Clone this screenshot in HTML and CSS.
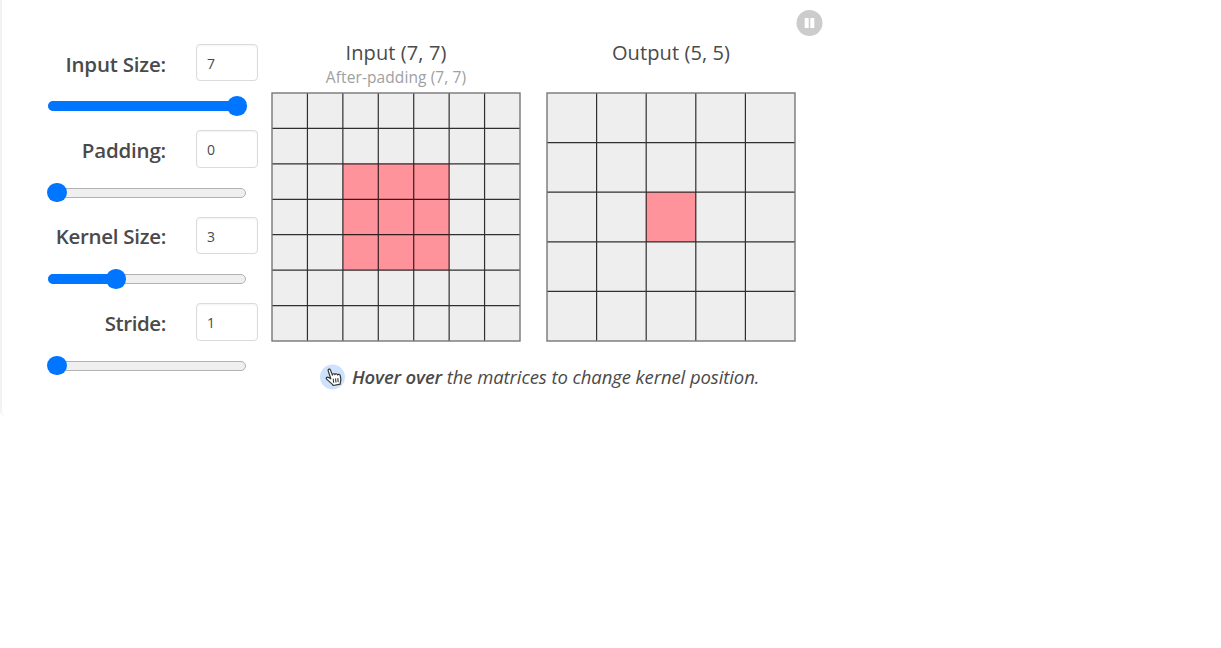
FILE: index.html
```html
<!DOCTYPE html>
<html lang="en">
<head>
<meta charset="utf-8">
<title>Convolution hyperparameters</title>
<link rel="stylesheet" href="styles.css">
</head>
<body>
<main class="panel">
  <section class="controls">
    <div class="control">
      <div class="field"><label class="l-input">Input Size:</label><span class="number">7</span></div>
      <div class="track"><div class="fill" style="width:189px"></div><div class="thumb" style="left:179px"></div></div>
    </div>
    <div class="control">
      <div class="field"><label class="l-pad">Padding:</label><span class="number">0</span></div>
      <div class="track"><div class="thumb" style="left:-1px"></div></div>
    </div>
    <div class="control">
      <div class="field"><label class="l-kernel">Kernel Size:</label><span class="number">3</span></div>
      <div class="track"><div class="fill" style="width:68px"></div><div class="thumb" style="left:58px"></div></div>
    </div>
    <div class="control">
      <div class="field"><label class="l-stride">Stride:</label><span class="number">1</span></div>
      <div class="track"><div class="thumb" style="left:-1px"></div></div>
    </div>
  </section>
  <section class="view">
    <div class="matrices">
      <div class="matrix">
        <h2>Input (7, 7)</h2>
        <p class="sub">After-padding (7, 7)</p>
        <svg class="grid" width="250" height="250" viewBox="0 0 250 250">
          <rect x="1" y="1" width="248" height="248" fill="#eee"/>
          <rect x="71.86" y="71.86" width="106.28" height="106.28" fill="#ff939b"/>
          <path class="line" d="M36.43 1v248M71.86 1v248M107.29 1v248M142.71 1v248M178.14 1v248M213.57 1v248M1 36.43h248M1 71.86h248M1 107.29h248M1 142.71h248M1 178.14h248M1 213.57h248"/>
          <rect class="edge" x="1" y="1" width="248" height="248"/>
        </svg>
      </div>
      <div class="matrix">
        <h2>Output (5, 5)</h2>
        <p class="sub"></p>
        <svg class="grid" width="250" height="250" viewBox="0 0 250 250">
          <rect x="1" y="1" width="248" height="248" fill="#eee"/>
          <rect x="100.2" y="100.2" width="49.6" height="49.6" fill="#ff939b"/>
          <path class="line" d="M50.6 1v248M100.2 1v248M149.8 1v248M199.4 1v248M1 50.6h248M1 100.2h248M1 149.8h248M1 199.4h248"/>
          <rect class="edge" x="1" y="1" width="248" height="248"/>
        </svg>
      </div>
    </div>
    <div class="hint">
      <svg class="hand" width="26" height="26" viewBox="0 0 26 26">
        <circle cx="12.5" cy="13" r="12.5" fill="#cfe2fb"/>
        <path d="M10.8 14.8 8.2 6.9C7.6 5.1 9.8 4.3 10.5 6.1L12.4 11.1C12.2 9.6 14.4 9.2 14.9 10.7 15.2 9.3 17.2 9.5 17.6 11 18.3 9.8 20 10.4 20.3 11.8L20.8 15.2C21 17 20.2 18 20.2 20.2L13.2 21.5C12.2 19.4 9.2 17.8 6.8 15.4 5.3 13.9 7.2 12.6 8.5 13.4Z" fill="#fff" stroke="#333" stroke-width="1.2" stroke-linejoin="round"/>
        <path d="M13.2 14.8l.5 4M15.5 14.5l.5 4M17.8 14.1l.4 4" stroke="#333" stroke-width="1.1"/>
      </svg>
      <p><strong>Hover over</strong> <span>the matrices to change kernel position.</span></p>
    </div>
  </section>
  <svg class="pause" width="27" height="27" viewBox="0 0 27 27">
    <circle cx="13.5" cy="13" r="13" fill="#ccc"/>
    <path d="M8.7 8h4v10h-4zM14.3 8h4v10h-4z" fill="#fff"/>
  </svg>
</main>
</body>
</html>
```
FILE: styles.css
```css
* { box-sizing: border-box; }
body {
  margin: 0;
  background: #fff;
  color: #4a4a4a;
  font-family: "Open Sans", "Noto Sans", sans-serif;
}
p, h2 { margin: 0; font-weight: 400; white-space: nowrap; }
.panel {
  display: flex;
  align-items: flex-start;
  width: 830px;
  height: 416px;
  border-left: 2px solid #f3f3f3;
  border-bottom-left-radius: 5px;
}
.controls {
  display: flex;
  flex-direction: column;
  width: 210px;
  margin: 44px 13px 0 46px;
}
.control { height: 86.4px; }
.field {
  display: flex;
  justify-content: flex-end;
  align-items: center;
  gap: 30px;
  height: 37.4px;
}
.field label {
  font-size: 20.5px;
  line-height: 28px;
  font-weight: 550;
  white-space: nowrap;
  padding-top: 2px;
}
.l-input { letter-spacing: -0.2px; }
.l-pad { letter-spacing: -0.2px; }
.l-kernel { letter-spacing: -0.3px; }
.l-stride { letter-spacing: -0.4px; }
.number {
  width: 62px;
  height: 37.4px;
  padding-left: 10px;
  border: 1px solid #dbdbdb;
  border-radius: 4px;
  box-shadow: inset 0 1px 2px rgba(10, 10, 10, .05);
  font-size: 14px;
  line-height: 37px;
}
.track {
  position: relative;
  width: 198px;
  height: 10px;
  margin-top: 20px;
  border: 1px solid #b2b2b2;
  border-radius: 5px;
  background: #efefef;
}
.fill {
  height: 10px;
  margin: -1px;
  border-radius: 5px 0 0 5px;
  background: #0075ff;
}
.thumb {
  position: absolute;
  top: -6px;
  width: 19.5px;
  height: 19.5px;
  margin-left: -1px;
  border-radius: 50%;
  background: #0075ff;
}
.view { width: 525px; padding-top: 38px; }
.matrices { display: flex; gap: 25px; }
.matrix { width: 250px; text-align: center; }
.matrix h2 { font-size: 20px; line-height: 30px; letter-spacing: 0.1px; }
.sub {
  height: 24px;
  font-size: 15.5px;
  line-height: 19px;
  color: #a0a0a0;
  letter-spacing: 0.1px;
}
.grid { display: block; }
.line { fill: none; stroke: #000; stroke-opacity: .8; stroke-width: 1.2; }
.edge { fill: none; stroke: #777; stroke-width: 1.4; }
.hint {
  display: flex;
  align-items: center;
  gap: 6px;
  margin: 21px 0 0 49px;
  font-size: 18.5px;
  line-height: 27px;
  font-style: italic;
}
.hint strong { font-weight: 650; letter-spacing: -0.15px; }
.hint span { letter-spacing: -0.09px; }
.pause { margin-top: 10px; }
```
